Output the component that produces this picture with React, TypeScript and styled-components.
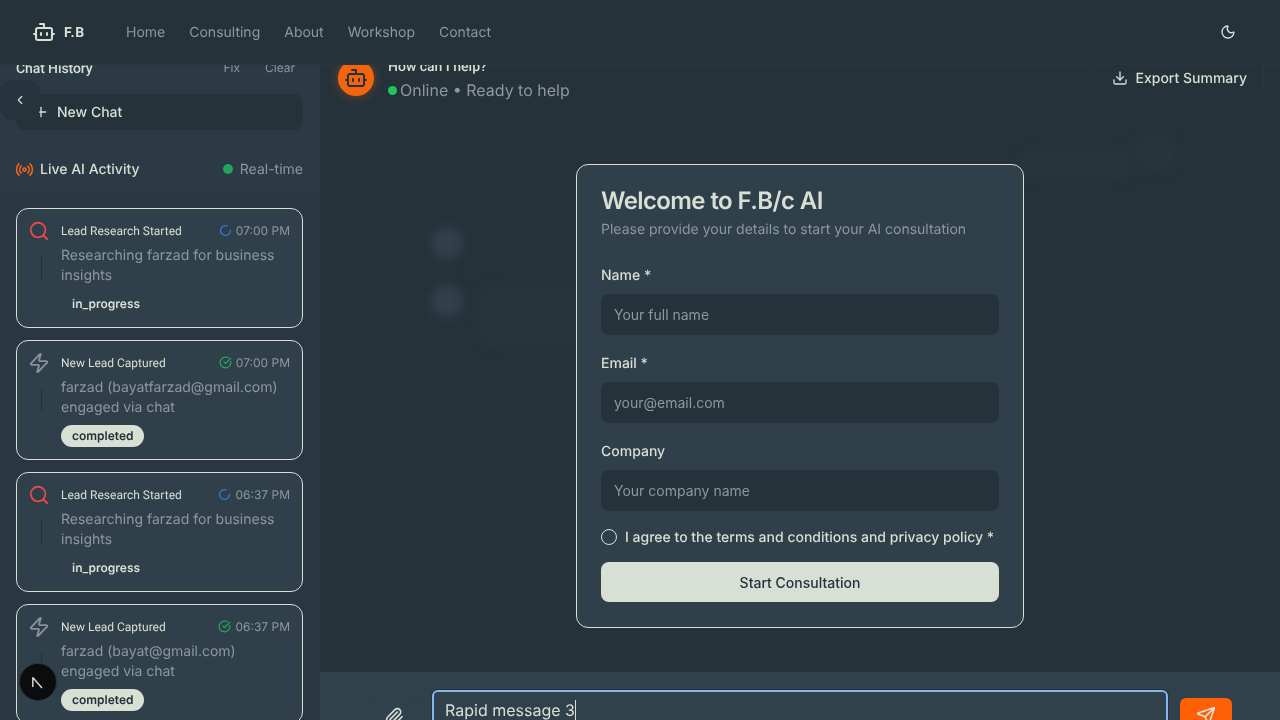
import React from "react";
import styled, { createGlobalStyle } from "styled-components";
import {
  Bot,
  ChevronLeft,
  CircleCheckBig,
  Download,
  LoaderCircle,
  Moon,
  Paperclip,
  Plus,
  Radio,
  Search,
  Send,
  Zap,
} from "lucide-react";

const NAV_LINKS = ["Home", "Consulting", "About", "Workshop", "Contact"];

const ACTIVITIES = [
  {
    kind: "research",
    title: "Lead Research Started",
    time: "07:00 PM",
    text: "Researching farzad for business insights",
    status: "in_progress",
  },
  {
    kind: "lead",
    title: "New Lead Captured",
    time: "07:00 PM",
    text: "farzad (bayatfarzad@gmail.com) engaged via chat",
    status: "completed",
  },
  {
    kind: "research",
    title: "Lead Research Started",
    time: "06:37 PM",
    text: "Researching farzad for business insights",
    status: "in_progress",
  },
  {
    kind: "lead",
    title: "New Lead Captured",
    time: "06:37 PM",
    text: "farzad (bayat@gmail.com) engaged via chat",
    status: "completed",
  },
];

const FIELDS = [
  { label: "Name *", placeholder: "Your full name" },
  { label: "Email *", placeholder: "your@email.com" },
  { label: "Company", placeholder: "Your company name" },
];

export default function App() {
  return (
    <Page>
      <GlobalStyle />
      <TopBar>
        <Brand>
          <Bot size={24} />
          <BrandName>F.B</BrandName>
        </Brand>
        <Nav>
          {NAV_LINKS.map((link) => (
            <NavLink key={link}>{link}</NavLink>
          ))}
        </Nav>
        <ThemeButton>
          <Moon size={16} />
        </ThemeButton>
      </TopBar>

      <Sidebar>
        <HistoryHead>
          <HistoryTitle>Chat History</HistoryTitle>
          <HistoryActions>
            <HistoryAction>Fix</HistoryAction>
            <HistoryAction>Clear</HistoryAction>
          </HistoryActions>
        </HistoryHead>
        <NewChat>
          <Plus size={16} />
          New Chat
        </NewChat>
        <LiveHead>
          <LiveTitle>
            <Radio size={19} color="#f4641c" />
            Live AI Activity
          </LiveTitle>
          <RealTime>
            <GreenDot />
            Real-time
          </RealTime>
        </LiveHead>
        <ActivityList>
          {ACTIVITIES.map((item, i) => (
            <ActivityCard key={i}>
              <IconColumn>
                {item.kind === "research" ? (
                  <Search size={22} color="#e5484d" />
                ) : (
                  <Zap size={22} color="#87919c" />
                )}
                <Connector />
              </IconColumn>
              <ActivityBody>
                <ActivityTop>
                  <ActivityTitle>{item.title}</ActivityTitle>
                  <ActivityTime>
                    {item.kind === "research" ? (
                      <LoaderCircle size={13} color="#3b74d8" strokeWidth={2.4} />
                    ) : (
                      <CircleCheckBig size={13} color="#22b35e" />
                    )}
                    {item.time}
                  </ActivityTime>
                </ActivityTop>
                <ActivityText>{item.text}</ActivityText>
                <Badge $filled={item.status === "completed"}>{item.status}</Badge>
              </ActivityBody>
            </ActivityCard>
          ))}
        </ActivityList>
      </Sidebar>

      <CollapseButton>
        <ChevronLeft size={14} />
      </CollapseButton>

      <DevBadge>
        <svg width="16" height="16" viewBox="0 0 16 16" fill="none">
          <path d="M2.8 13V3.6L12 14" stroke="#d4d4d4" strokeWidth="1.5" strokeLinejoin="bevel" />
        </svg>
      </DevBadge>

      <Main>
        <ChatHead>
          <HeadLeft>
            <Avatar>
              <Bot size={24} color="#25323a" />
            </Avatar>
            <HeadText>
              <HeadTitle>How can I help?</HeadTitle>
              <HeadStatus>
                <OnlineDot />
                Online • Ready to help
              </HeadStatus>
            </HeadText>
          </HeadLeft>
          <ExportButton>
            <Download size={16} />
            Export Summary
          </ExportButton>
        </ChatHead>

        <Stage>
          <BlurLayer>
            <BlurCircle $top={111} />
            <BlurCircle $top={169} />
            <BlurPatch $top={169} $left={160} $width={200} $height={62} />
            <BlurPatch $top={34} $left={700} $width={110} $height={30} />
            <BlurPatch $top={20} $left={815} $width={40} $height={34} />
          </BlurLayer>
          <WelcomeCard>
            <WelcomeTitle>Welcome to F.B/c AI</WelcomeTitle>
            <WelcomeSub>Please provide your details to start your AI consultation</WelcomeSub>
            <FieldStack>
              {FIELDS.map((field) => (
                <Field key={field.label}>
                  <FieldLabel>{field.label}</FieldLabel>
                  <FieldInput placeholder={field.placeholder} readOnly />
                </Field>
              ))}
            </FieldStack>
            <AgreeRow>
              <AgreeCircle />
              I agree to the terms and conditions and privacy policy *
            </AgreeRow>
            <StartButton>Start Consultation</StartButton>
          </WelcomeCard>
        </Stage>

        <Composer>
          <AttachButton>
            <Paperclip size={20} />
          </AttachButton>
          <MessageBox>
            Rapid message 3<Caret />
          </MessageBox>
          <SendButton>
            <Send size={20} />
          </SendButton>
        </Composer>
      </Main>
    </Page>
  );
}

const GlobalStyle = createGlobalStyle`
  html, body {
    margin: 0;
    padding: 0;
    background: #25323a;
    overflow: hidden;
    -webkit-font-smoothing: antialiased;
    text-rendering: geometricPrecision;
  }
  * {
    box-sizing: border-box;
  }
`;

const Page = styled.div`
  position: relative;
  display: flex;
  width: 1280px;
  height: 720px;
  overflow: hidden;
  opacity: 0.999;
  background: #25323a;
  color: #d8dfd5;
  font-family: Inter, "Liberation Sans", sans-serif;
`;

const TopBar = styled.header`
  position: absolute;
  top: 0;
  left: 0;
  right: 0;
  z-index: 5;
  display: flex;
  align-items: center;
  height: 65px;
  padding: 0 44px 0 32px;
  background: #25323a;
  border-bottom: 1px solid #29363e;
`;

const Brand = styled.div`
  display: flex;
  align-items: center;
  gap: 8px;
  width: 94px;
`;

const BrandName = styled.span`
  padding-top: 2px;
  font-family: Roboto, sans-serif;
  font-size: 14px;
  font-weight: 700;
  letter-spacing: 0.6px;
`;

const Nav = styled.nav`
  display: flex;
  gap: 24px;
`;

const NavLink = styled.a`
  padding-top: 2px;
  font-size: 14px;
  line-height: 20px;
  color: #8e979c;
`;

const ThemeButton = styled.div`
  display: flex;
  margin-left: auto;
`;

const Sidebar = styled.aside`
  flex: none;
  display: flex;
  flex-direction: column;
  width: 320px;
  height: 720px;
  padding-top: 58px;
  background: #2c3a45;
  border-right: 1px solid #2a3843;
`;

const HistoryHead = styled.div`
  flex: none;
  display: flex;
  align-items: center;
  justify-content: space-between;
  height: 20px;
  padding: 0 24px 0 16px;
`;

const HistoryTitle = styled.span`
  padding-top: 2px;
  font-family: Roboto, sans-serif;
  font-size: 14px;
  font-weight: 500;
  letter-spacing: -0.1px;
`;

const HistoryActions = styled.div`
  display: flex;
  gap: 25px;
  padding-bottom: 2px;
`;

const HistoryAction = styled.span`
  font-size: 12px;
  color: #8e979c;
`;

const NewChat = styled.div`
  flex: none;
  display: flex;
  align-items: center;
  gap: 8px;
  height: 36px;
  margin: 16px 16px 0;
  padding-left: 16px;
  border-radius: 8px;
  background: #25323a;
  border: 1px solid #2b3439;
  font-size: 14px;
  font-weight: 500;
`;

const LiveHead = styled.div`
  flex: none;
  display: flex;
  align-items: center;
  justify-content: space-between;
  height: 46px;
  margin-top: 16px;
  padding: 0 16px 0 15px;
  font-size: 14px;
`;

const LiveTitle = styled.div`
  display: flex;
  align-items: center;
  gap: 6px;
  font-weight: 500;
`;

const RealTime = styled.div`
  display: flex;
  align-items: center;
  gap: 7px;
  color: #8e979c;
`;

const GreenDot = styled.span`
  width: 10px;
  height: 10px;
  border-radius: 50%;
  background: #22a55b;
`;

const ActivityList = styled.div`
  flex: none;
  display: flex;
  flex-direction: column;
  gap: 12px;
  padding: 16px 16px 0;
  background: #2a3742;
`;

const ActivityCard = styled.div`
  flex: none;
  display: flex;
  gap: 11px;
  height: 120px;
  padding: 12px;
  border: 1px solid #d8dfd5;
  border-radius: 12px;
  background: #30404b;
`;

const IconColumn = styled.div`
  flex: none;
  display: flex;
  flex-direction: column;
  width: 22px;
  margin: -1px 0 0 -1px;
`;

const Connector = styled.div`
  width: 1px;
  height: 25px;
  margin: 14px 0 0 13px;
  background: #25323a;
`;

const ActivityBody = styled.div`
  flex: 1;
  min-width: 0;
  display: flex;
  flex-direction: column;
  align-items: flex-start;
`;

const ActivityTop = styled.div`
  display: flex;
  align-items: center;
  justify-content: space-between;
  width: 100%;
  height: 20px;
`;

const ActivityTitle = styled.span`
  font-family: Roboto, sans-serif;
  font-size: 12px;
`;

const ActivityTime = styled.span`
  display: flex;
  align-items: center;
  gap: 4px;
  padding-bottom: 1px;
  font-size: 12px;
  color: #8e979c;
`;

const ActivityText = styled.p`
  margin: 5px 0 7px;
  font-size: 14px;
  line-height: 20px;
  color: #8e979c;
`;

const Badge = styled.span<{ $filled: boolean }>`
  height: 22px;
  padding: 0 10px 0 11px;
  border-radius: 11px;
  font-size: 12px;
  font-weight: 600;
  line-height: 22px;
  background: ${(p) => (p.$filled ? "#d8dfd5" : "transparent")};
  color: ${(p) => (p.$filled ? "#25323a" : "#d8dfd5")};
`;

const CollapseButton = styled.div`
  position: absolute;
  top: 80px;
  left: 0;
  z-index: 3;
  display: flex;
  align-items: center;
  justify-content: center;
  width: 40px;
  height: 40px;
  border-radius: 12px;
  background: #27343d;
`;

const DevBadge = styled.div`
  position: absolute;
  left: 19px;
  top: 663px;
  z-index: 6;
  display: flex;
  align-items: center;
  justify-content: center;
  width: 38px;
  height: 38px;
  border-radius: 50%;
  background: #0a0c0e;
  border: 1px solid #2c3135;
`;

const Main = styled.main`
  flex: 1;
  min-width: 0;
  display: flex;
  flex-direction: column;
  height: 720px;
`;

const ChatHead = styled.div`
  flex: none;
  display: flex;
  align-items: flex-start;
  justify-content: space-between;
  height: 58px;
  margin-top: 58px;
  padding: 0 16px 0 18px;
`;

const HeadLeft = styled.div`
  display: flex;
  gap: 14px;
`;

const Avatar = styled.div`
  display: flex;
  align-items: center;
  justify-content: center;
  width: 36px;
  height: 36px;
  margin-top: 2px;
  border-radius: 50%;
  background: #f4640c;
  box-shadow: 0 0 10px 1px rgba(244, 100, 12, 0.35);
`;

const HeadText = styled.div`
  display: flex;
  flex-direction: column;
  padding-top: 1px;
`;

const HeadTitle = styled.span`
  font-family: Roboto, sans-serif;
  font-size: 14px;
  font-weight: 500;
  line-height: 17px;
`;

const HeadStatus = styled.span`
  display: flex;
  align-items: center;
  gap: 3px;
  margin-top: 2px;
  font-size: 16px;
  line-height: 24px;
  color: #8e979c;
`;

const OnlineDot = styled.span`
  width: 9px;
  height: 9px;
  border-radius: 50%;
  background: #22c55e;
`;

const ExportButton = styled.div`
  display: flex;
  align-items: center;
  gap: 8px;
  height: 40px;
  padding: 0 16px 0 18px;
  border: 1px solid #29363e;
  border-radius: 8px;
  font-size: 14px;
  font-weight: 500;
`;

const Stage = styled.div`
  position: relative;
  flex: 1;
  display: flex;
  align-items: flex-start;
  justify-content: center;
  padding-top: 48px;
`;

const BlurLayer = styled.div`
  position: absolute;
  inset: 0;
  filter: blur(5px);
`;

const BlurCircle = styled.div<{ $top: number }>`
  position: absolute;
  top: ${(p) => p.$top}px;
  left: 111px;
  width: 32px;
  height: 32px;
  border-radius: 50%;
  background: #31404a;
`;

const BlurPatch = styled.div<{ $top: number; $left: number; $width: number; $height: number }>`
  position: absolute;
  top: ${(p) => p.$top}px;
  left: ${(p) => p.$left}px;
  width: ${(p) => p.$width}px;
  height: ${(p) => p.$height}px;
  border-radius: 12px;
  background: #28353d;
`;

const WelcomeCard = styled.section`
  position: relative;
  display: flex;
  flex-direction: column;
  width: 448px;
  height: 464px;
  padding: 24px;
  border: 1px solid #d8dfd5;
  border-radius: 12px;
  background: #30404b;
`;

const WelcomeTitle = styled.h2`
  margin: 0;
  font-size: 24px;
  font-weight: 600;
  line-height: 24px;
  letter-spacing: -0.6px;
`;

const WelcomeSub = styled.p`
  margin: 7px 0 0;
  font-size: 14px;
  line-height: 20px;
  color: #8e979c;
`;

const FieldStack = styled.div`
  display: flex;
  flex-direction: column;
  gap: 18px;
  margin-top: 25px;
`;

const Field = styled.label`
  display: flex;
  flex-direction: column;
  gap: 8px;
`;

const FieldLabel = styled.span`
  font-size: 14px;
  font-weight: 500;
  line-height: 21px;
`;

const FieldInput = styled.input`
  height: 41px;
  padding: 0 13px;
  border: none;
  border-radius: 8px;
  outline: none;
  background: #25323a;
  color: #d8dfd5;
  font-family: inherit;
  font-size: 14px;

  &::placeholder {
    color: #8e979c;
  }
`;

const AgreeRow = styled.div`
  display: flex;
  align-items: center;
  gap: 8px;
  margin-top: 17px;
  font-size: 14px;
  font-weight: 500;
  line-height: 20px;
`;

const AgreeCircle = styled.span`
  width: 16px;
  height: 16px;
  margin-top: -2px;
  border: 1px solid #d8dfd5;
  border-radius: 50%;
`;

const StartButton = styled.button`
  height: 40px;
  margin-top: 14px;
  border: none;
  border-radius: 8px;
  background: #d8dfd5;
  color: #25323a;
  font-family: inherit;
  font-size: 14px;
  font-weight: 500;
`;

const Composer = styled.div`
  flex: none;
  display: flex;
  align-items: flex-start;
  height: 48px;
  padding: 18px 48px 0;
  background: #31414b;
`;

const AttachButton = styled.div`
  flex: none;
  display: flex;
  justify-content: center;
  width: 52px;
  height: 40px;
  margin: 8px 12px 0 0;
  padding-top: 8px;
  border: 1px solid #2f3f49;
  border-radius: 6px;
`;

const MessageBox = styled.div`
  flex: none;
  display: flex;
  align-items: flex-start;
  width: 736px;
  height: 60px;
  padding: 8px 11px 0;
  border: 2px solid #8ab4ee;
  border-radius: 6px;
  font-size: 16px;
  line-height: 20px;
  box-shadow: 0 0 0 1px #25323a;
`;

const Caret = styled.span`
  width: 1px;
  height: 20px;
  background: #d8dfd5;
`;

const SendButton = styled.div`
  display: flex;
  justify-content: center;
  width: 52px;
  height: 40px;
  margin: 8px 0 0 12px;
  padding-top: 8px;
  border-radius: 6px;
  background: #ff5f05;
`;
